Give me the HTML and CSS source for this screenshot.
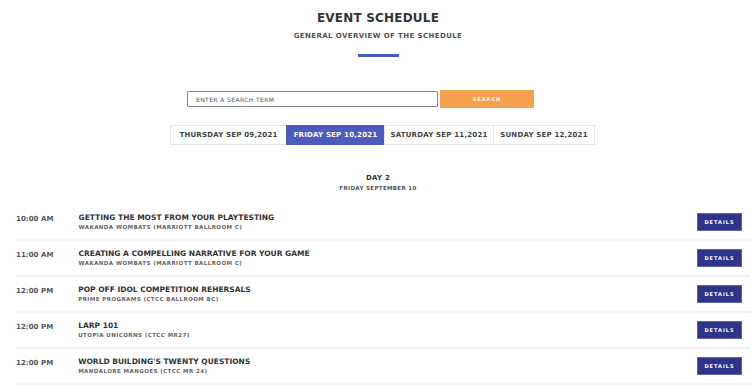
FILE: index.html
```html
<!DOCTYPE html>
<html>
<head>
<meta charset="utf-8">
<link rel="stylesheet" href="styles.css">
</head>
<body>
<header class="hero">
  <h1 class="title">EVENT SCHEDULE</h1>
  <p class="subtitle">GENERAL OVERVIEW OF THE SCHEDULE</p>
  <div class="bar"></div>
</header>

<form class="search">
  <input class="search-input" type="text" placeholder="ENTER A SEARCH TERM">
  <button class="search-btn" type="button">SEARCH</button>
</form>

<nav class="tabs">
  <div class="tab">THURSDAY SEP 09,2021</div>
  <div class="tab active">FRIDAY SEP 10,2021</div>
  <div class="tab">SATURDAY SEP 11,2021</div>
  <div class="tab">SUNDAY SEP 12,2021</div>
</nav>

<section class="day">
  <div class="day-title">DAY 2</div>
  <div class="day-date">FRIDAY SEPTEMBER 10</div>
</section>

<ul class="events">
  <li class="event">
    <div class="time">10:00 AM</div>
    <div class="info">
      <div class="ev-title">GETTING THE MOST FROM YOUR PLAYTESTING</div>
      <div class="ev-sub">WAKANDA WOMBATS (MARRIOTT BALLROOM C)</div>
    </div>
    <button class="details" type="button">DETAILS</button>
  </li>
  <li class="event">
    <div class="time">11:00 AM</div>
    <div class="info">
      <div class="ev-title">CREATING A COMPELLING NARRATIVE FOR YOUR GAME</div>
      <div class="ev-sub">WAKANDA WOMBATS (MARRIOTT BALLROOM C)</div>
    </div>
    <button class="details" type="button">DETAILS</button>
  </li>
  <li class="event">
    <div class="time">12:00 PM</div>
    <div class="info">
      <div class="ev-title">POP OFF IDOL COMPETITION REHERSALS</div>
      <div class="ev-sub">PRIME PROGRAMS (CTCC BALLROOM BC)</div>
    </div>
    <button class="details" type="button">DETAILS</button>
  </li>
  <li class="event">
    <div class="time">12:00 PM</div>
    <div class="info">
      <div class="ev-title">LARP 101</div>
      <div class="ev-sub">UTOPIA UNICORNS (CTCC MR27)</div>
    </div>
    <button class="details" type="button">DETAILS</button>
  </li>
  <li class="event">
    <div class="time">12:00 PM</div>
    <div class="info">
      <div class="ev-title">WORLD BUILDING'S TWENTY QUESTIONS</div>
      <div class="ev-sub">MANDALORE MANGOES (CTCC MR 24)</div>
    </div>
    <button class="details" type="button">DETAILS</button>
  </li>
</ul>
</body>
</html>
```

FILE: styles.css
```css
* { box-sizing: border-box; }
html, body { margin: 0; padding: 0; background: #fff; }
body {
  font-family: "DejaVu Sans", "Open Sans", sans-serif;
  color: #3a3a3a;
  width: 756px;
  overflow: hidden;
}
.hero {
  display: flex;
  flex-direction: column;
  align-items: center;
  padding-top: 11px;
}
.title {
  margin: 0;
  font-size: 12px;
  line-height: 14px;
  font-weight: bold;
  letter-spacing: 0.2px;
  color: #333;
}
.subtitle {
  margin: 7px 0 0;
  font-size: 7px;
  line-height: 9px;
  font-weight: bold;
  letter-spacing: 0.4px;
  color: #555;
}
.bar {
  margin-top: 13px;
  width: 41px;
  height: 3px;
  background: #4c5bbd;
}
.search {
  display: flex;
  margin: 33px 0 0 187px;
  gap: 2px;
  align-items: center;
}
.search-input {
  width: 251px;
  height: 16px;
  border: 1px solid #888;
  border-radius: 1px;
  padding: 0 8px;
  font-family: inherit;
  font-size: 6px;
  letter-spacing: 0.4px;
  outline: none;
}
.search-input::placeholder { color: #555; }
.search-btn {
  width: 94px;
  height: 18px;
  border: none;
  background: #f5a04d;
  color: #fff;
  font-family: inherit;
  font-size: 5px;
  font-weight: bold;
  letter-spacing: 1px;
  padding: 0;
}
.tabs {
  display: flex;
  margin: 17px 0 0 170px;
}
.tab {
  height: 20px;
  display: flex;
  align-items: center;
  justify-content: center;
  border: 1px solid #e6e6e6;
  border-right: none;
  font-size: 7px;
  font-weight: bold;
  letter-spacing: 0.2px;
  color: #444;
}
.tab:nth-child(1) { width: 116px; }
.tab:nth-child(2) { width: 98px; }
.tab:nth-child(3) { width: 109px; }
.tab:nth-child(4) { width: 102px; border-right: 1px solid #e6e6e6; }
.tab.active {
  background: #4c5bbd;
  border-color: #4c5bbd;
  color: #fff;
}
.day {
  display: flex;
  flex-direction: column;
  align-items: center;
  margin-top: 29px;
}
.day-title {
  font-size: 7px;
  line-height: 9px;
  font-weight: bold;
  color: #333;
  letter-spacing: 0.2px;
}
.day-date {
  margin-top: 2px;
  font-size: 5.5px;
  line-height: 7px;
  font-weight: bold;
  color: #555;
  letter-spacing: 0.35px;
}
.events {
  list-style: none;
  margin: 13px 0 0 16px;
  padding: 0;
  width: 734px;
}
.event {
  display: flex;
  align-items: center;
  height: 36px;
  border-bottom: 2px solid #f1f1f1;
}
.time {
  font-size: 7px;
  font-weight: bold;
  color: #555;
  letter-spacing: 0.05px;
  margin-right: 25px;
  align-self: flex-start;
  margin-top: 10px;
}
.info {
  flex: 1;
  display: flex;
  flex-direction: column;
}
.ev-title {
  font-size: 7.5px;
  line-height: 10px;
  font-weight: bold;
  color: #333;
  letter-spacing: 0;
}
.ev-sub {
  font-size: 5.5px;
  line-height: 8px;
  font-weight: bold;
  color: #666;
  letter-spacing: 0.43px;
}
.details {
  width: 45px;
  height: 18px;
  margin-right: 8px;
  border: 1px solid #5a63b0;
  background: #2e3589;
  color: #fff;
  font-family: inherit;
  font-size: 5px;
  font-weight: bold;
  letter-spacing: 1px;
  padding: 0;
}
```
